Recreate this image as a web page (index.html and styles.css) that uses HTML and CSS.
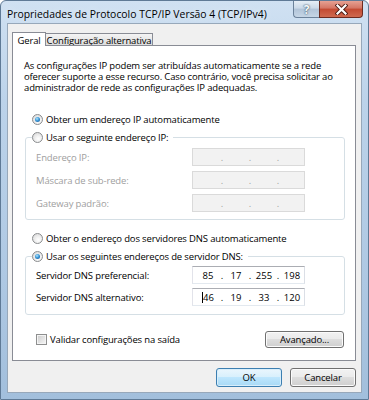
FILE: index.html
```html
<!DOCTYPE html>
<html lang="pt-BR">

<head>
    <meta charset="UTF-8">
    <meta name="viewport" content="width=device-width, initial-scale=1.0">
    <title>Propriedades de Protocolo TCP/IP Versão 4 (TCP/IPv4)</title>
    <link rel="stylesheet" href="styles.css">
</head>

<body>
    <div class="window">
        <div class="titlebar">
            <span class="title">Propriedades de Protocolo TCP/IP Versão 4 (TCP/IPv4)</span>
            <div class="caption-buttons">
                <span class="cap help">?</span>
                <span class="cap close">
                    <svg width="13" height="11" viewBox="0 0 13 11">
                        <path d="M2.5 1.5 L10.5 9.5 M10.5 1.5 L2.5 9.5" stroke="#4a1a12" stroke-width="4" stroke-linecap="square" fill="none" />
                        <path d="M2.5 1.5 L10.5 9.5 M10.5 1.5 L2.5 9.5" stroke="#ffffff" stroke-width="2.2" stroke-linecap="square" fill="none" />
                    </svg>
                </span>
            </div>
        </div>

        <div class="client">
            <div class="tabs">
                <span class="tab selected">Geral</span>
                <span class="tab">Configuração alternativa</span>
            </div>

            <div class="panel">
                <p class="intro">As configurações IP podem ser atribuídas automaticamente se a rede<br>oferecer suporte a esse recurso. Caso contrário, você precisa solicitar ao<br>administrador de rede as configurações IP adequadas.</p>

                <div class="option first"><span class="radio checked"></span>Obter um endereço IP automaticamente</div>

                <fieldset class="group disabled">
                    <legend><span class="option"><span class="radio"></span>Usar o seguinte endereço IP:</span></legend>
                    <div class="field">
                        <span class="field-label">Endereço IP:</span>
                        <span class="ip"><span class="seg"></span><span class="dot">.</span><span class="seg"></span><span class="dot">.</span><span class="seg"></span><span class="dot">.</span><span class="seg"></span></span>
                    </div>
                    <div class="field">
                        <span class="field-label">Máscara de sub-rede:</span>
                        <span class="ip"><span class="seg"></span><span class="dot">.</span><span class="seg"></span><span class="dot">.</span><span class="seg"></span><span class="dot">.</span><span class="seg"></span></span>
                    </div>
                    <div class="field">
                        <span class="field-label">Gateway padrão:</span>
                        <span class="ip"><span class="seg"></span><span class="dot">.</span><span class="seg"></span><span class="dot">.</span><span class="seg"></span><span class="dot">.</span><span class="seg"></span></span>
                    </div>
                </fieldset>

                <div class="option dns-auto"><span class="radio"></span>Obter o endereço dos servidores DNS automaticamente</div>

                <fieldset class="group dns">
                    <legend><span class="option"><span class="radio checked"></span>Usar os seguintes endereços de servidor DNS:</span></legend>
                    <div class="field">
                        <span class="field-label">Servidor DNS preferencial:</span>
                        <span class="ip"><span class="seg">85</span><span class="dot">.</span><span class="seg">17</span><span class="dot">.</span><span class="seg">255</span><span class="dot">.</span><span class="seg">198</span></span>
                    </div>
                    <div class="field">
                        <span class="field-label">Servidor DNS alternativo:</span>
                        <span class="ip"><span class="seg"><span class="caret"></span>46</span><span class="dot">.</span><span class="seg">19</span><span class="dot">.</span><span class="seg">33</span><span class="dot">.</span><span class="seg">120</span></span>
                    </div>
                </fieldset>

                <div class="check-row">
                    <span class="check"></span>
                    <span class="check-label">Validar configurações na saída</span>
                    <button class="btn advanced">Avançado...</button>
                </div>
            </div>

            <div class="actions">
                <button class="btn default">OK</button>
                <button class="btn">Cancelar</button>
            </div>
        </div>
    </div>
</body>

</html>
```

FILE: styles.css
```css
body {
    margin: 0;
    font-family: "Open Sans", "Noto Sans", sans-serif;
    font-size: 9.5px;
    letter-spacing: -0.15px;
    color: #000;
}

/* window frame */
.window {
    width: 369px;
    height: 400px;
    box-sizing: border-box;
    border: 1px solid #5f7a96;
    border-radius: 6px 6px 0 0;
    background: linear-gradient(to bottom, #d0e1f2 0%, #bcd3ea 25%, #aec8e3 70%, #a2bfdc 100%);
    display: flex;
    flex-direction: column;
    overflow: hidden;
}

.titlebar {
    height: 22px;
    display: flex;
    align-items: flex-start;
    padding: 0 5px 0 6px;
}

.title {
    font-size: 10.4px;
    letter-spacing: 0;
    line-height: 14px;
    padding-top: 6px;
    color: #000;
    text-shadow: 0 0 6px #eaf2fa;
}

.caption-buttons {
    margin-left: auto;
    display: flex;
}

.cap {
    height: 17px;
    box-sizing: border-box;
    display: flex;
    align-items: center;
    justify-content: center;
}

.help {
    width: 26px;
    border: 1px solid #6c829a;
    border-top: none;
    border-right: none;
    border-radius: 0 0 0 4px;
    background: linear-gradient(to bottom, #e6eef6 0%, #cbd9e8 45%, #b2c4d8 50%, #c6d6e6 100%);
    color: #f4f8fc;
    font-weight: bold;
    font-size: 12px;
    text-shadow: 0 0 2px #44566a, 0 0 1px #44566a;
}

.close {
    width: 44px;
    border: 1px solid #6e2b20;
    border-top: none;
    border-radius: 0 0 4px 0;
    background: linear-gradient(to bottom, #e6a193 0%, #d47563 45%, #c34a32 50%, #cf6a50 100%);
}

/* client area */
.client {
    flex: 1;
    margin: 0 6px 6px 6px;
    border: 1px solid #97a8ba;
    background: #f0f0f0;
    padding-top: 8px;
    display: flex;
    flex-direction: column;
}

.tabs {
    height: 13px;
    display: flex;
    align-items: flex-end;
    margin-left: 4px;
}

.tab {
    box-sizing: border-box;
    height: 12px;
    width: 108px;
    margin-left: -1px;
    border: 1px solid #898c95;
    border-bottom: none;
    background: linear-gradient(to bottom, #f4f4f4 0%, #e8e8e8 50%, #dcdcdc 100%);
    text-align: center;
    white-space: nowrap;
    padding-top: 2px;
    line-height: 9px;
}

.tab.selected {
    position: relative;
    z-index: 1;
    width: 34px;
    height: 14px;
    margin-left: 0;
    margin-bottom: -1px;
    background: #fff;
    padding-top: 2px;
    line-height: 11px;
}

.panel {
    box-sizing: border-box;
    width: 344px;
    height: 316px;
    margin-left: 4px;
    border: 1px solid #898c95;
    background: #fff;
    padding: 0 10px 0 12px;
}

.intro {
    margin: 14px 0 0 -1px;
    line-height: 11px;
}

.option {
    display: flex;
    align-items: center;
    gap: 3px;
    height: 14px;
    white-space: nowrap;
}

.option.first {
    margin-top: 19px;
    padding-left: 7px;
}

.option.dns-auto {
    margin-top: 11px;
    padding-left: 7px;
}

.radio {
    width: 11px;
    height: 11px;
    box-sizing: border-box;
    border-radius: 50%;
    border: 1px solid #8a8c8e;
    background: radial-gradient(circle at 60% 65%, #ffffff 0%, #f2f2f2 35%, #d3d3d3 100%);
    display: grid;
    place-items: center;
}

.radio.checked::after {
    content: "";
    width: 5px;
    height: 5px;
    border-radius: 50%;
    background: radial-gradient(circle at 40% 35%, #b4e6fc 0%, #3a98d8 45%, #104c8c 100%);
}

/* group boxes */
.group {
    margin: 4px 0 0 0;
    padding: 4px 0 7px 10px;
    border: 1px solid #d5dfe5;
    border-radius: 3px;
    min-width: 0;
}

.group legend {
    margin-left: -4px;
    padding: 0 5px 0 0;
}

.group.dns {
    padding-top: 3px;
    padding-bottom: 8px;
}

.field {
    display: flex;
    align-items: center;
    height: 18px;
}

.field + .field {
    margin-top: 5px;
}

.dns .field + .field {
    margin-top: 4px;
}

.field-label {
    width: 156px;
}

.disabled .field-label {
    color: #a0a0a0;
}

.ip {
    box-sizing: border-box;
    width: 113px;
    height: 18px;
    display: flex;
    align-items: center;
    padding-left: 3px;
    border: 1px solid;
    border-color: #abadb3 #dbdfe6 #e3e9ef #e2e3ea;
    background: #fff;
    letter-spacing: 0;
}

.disabled .ip {
    background: #f2f2f2;
    border-color: #dadada;
    color: #a0a0a0;
}

.seg {
    width: 24px;
    text-align: center;
}

.dot {
    width: 4px;
    text-align: center;
}

.caret {
    display: inline-block;
    width: 1px;
    height: 11px;
    background: #000;
    vertical-align: middle;
}

/* bottom row */
.check-row {
    display: flex;
    align-items: center;
    margin-top: 16px;
    height: 17px;
    padding: 0 1px 0 11px;
}

.check {
    width: 11px;
    height: 11px;
    box-sizing: border-box;
    border: 1px solid #8e8f8f;
    background: linear-gradient(135deg, #cbcbcb 0%, #e6e6e6 60%, #f7f7f7 100%);
    box-shadow: inset 0 0 0 1px #f4f4f4;
}

.check-label {
    margin-left: 3px;
}

.btn {
    box-sizing: border-box;
    height: 19px;
    padding: 0;
    font-family: inherit;
    font-size: 9.5px;
    letter-spacing: inherit;
    color: #000;
    border: 1px solid #707070;
    border-radius: 3px;
    background: linear-gradient(to bottom, #f2f2f2 0%, #ebebeb 45%, #dddddd 50%, #cfcfcf 100%);
    box-shadow: inset 0 0 0 1px #fbfbfb;
}

.btn.advanced {
    margin-left: auto;
    width: 79px;
    height: 17px;
}

.actions {
    display: flex;
    justify-content: flex-end;
    gap: 8px;
    margin-top: 7px;
    padding-right: 5px;
}

.actions .btn {
    width: 66px;
}

.btn.default {
    border-color: #3c7fb1;
    background: linear-gradient(to bottom, #eaf6fd 0%, #d9f0fc 45%, #bee6fd 50%, #a7d9f5 100%);
    box-shadow: inset 0 0 0 1px #d8eefb;
}
```
